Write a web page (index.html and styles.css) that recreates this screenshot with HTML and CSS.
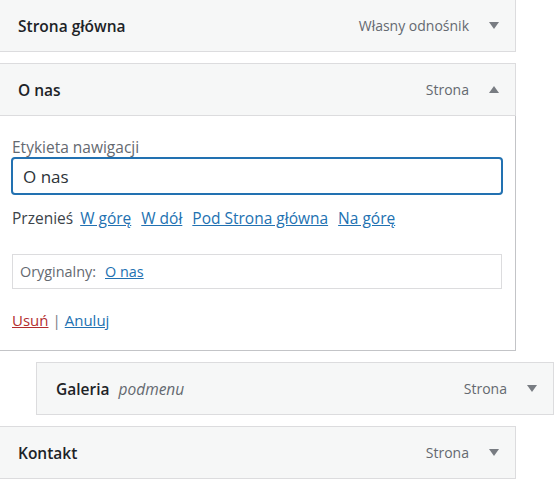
FILE: index.html
```html
<!DOCTYPE html>
<html lang="pl">
<head>
<meta charset="utf-8">
<title>Menu</title>
<link rel="stylesheet" href="styles.css">
</head>
<body>
<ul class="menu">
  <li class="item">
    <div class="bar">
      <span class="title">Strona główna</span>
      <span class="type">Własny odnośnik</span>
      <svg class="arrow" width="10" height="7" viewBox="0 0 10 7"><polygon points="0,0 10,0 5,7"/></svg>
    </div>
  </li>
  <li class="item">
    <div class="bar">
      <span class="title">O nas</span>
      <span class="type">Strona</span>
      <svg class="arrow" width="10" height="7" viewBox="0 0 10 7"><polygon points="0,7 10,7 5,0"/></svg>
    </div>
    <div class="settings">
      <label class="label" for="nav">Etykieta nawigacji</label>
      <input id="nav" class="field" type="text" value="O nas">
      <div class="move">
        <span class="move-label">Przenieś</span>
        <a href="#">W górę</a>
        <a href="#">W dół</a>
        <a href="#">Pod Strona główna</a>
        <a href="#">Na górę</a>
      </div>
      <div class="original">
        <span>Oryginalny:</span>
        <a href="#">O nas</a>
      </div>
      <div class="actions">
        <a href="#" class="delete">Usuń</a><span class="sep">|</span><a href="#">Anuluj</a>
      </div>
    </div>
  </li>
  <li class="item sub">
    <div class="bar">
      <span class="title">Galeria</span>
      <span class="subtitle">podmenu</span>
      <span class="type">Strona</span>
      <svg class="arrow" width="10" height="7" viewBox="0 0 10 7"><polygon points="0,0 10,0 5,7"/></svg>
    </div>
  </li>
  <li class="item">
    <div class="bar">
      <span class="title">Kontakt</span>
      <span class="type">Strona</span>
      <svg class="arrow" width="10" height="7" viewBox="0 0 10 7"><polygon points="0,0 10,0 5,7"/></svg>
    </div>
  </li>
</ul>
</body>
</html>
```

FILE: styles.css
```css
html, body {
  margin: 0;
  padding: 0;
  background: #ffffff;
}
body {
  font-family: "Open Sans", "Noto Sans", sans-serif;
  font-size: 15.5px;
  color: #1d2327;
}
.menu {
  list-style: none;
  margin: -1px 0 0 -2px;
  padding: 0;
  display: flex;
  flex-direction: column;
  gap: 11px;
}
.item {
  width: 518px;
}
.item.sub {
  margin-left: 38px;
}
.bar {
  box-sizing: border-box;
  height: 53px;
  border: 1px solid #dcdcde;
  background: #f6f7f7;
  display: flex;
  align-items: center;
  padding: 0 16px 0 19px;
}
.title {
  font-weight: 600;
  color: #1d2327;
}
.subtitle {
  font-style: italic;
  color: #646970;
  margin-left: 9px;
}
.type {
  margin-left: auto;
  color: #646970;
  font-size: 14px;
}
.arrow {
  margin-left: 20px;
  fill: #787c82;
}
.settings {
  box-sizing: border-box;
  border: 1px solid #c3c4c7;
  border-top: none;
  padding: 22px 12px 20px 13px;
}
.label {
  display: block;
  color: #646970;
  line-height: 19px;
}
.field {
  display: block;
  box-sizing: border-box;
  width: 492px;
  height: 38px;
  margin: 0 0 0 -1px;
  border: 2px solid #2271b1;
  border-radius: 4px;
  padding: 0 10px;
  font-family: inherit;
  font-size: 17px;
  color: #2c3338;
  outline: none;
}
.move {
  display: flex;
  gap: 10px;
  margin-top: 13px;
  line-height: 20px;
  color: #3c434a;
}
.move-label {
  margin-right: -3px;
}
a {
  color: #2271b1;
  text-decoration: underline;
}
.original {
  box-sizing: border-box;
  width: 490px;
  height: 35px;
  margin-top: 26px;
  border: 1px solid #dcdcde;
  display: flex;
  align-items: center;
  gap: 9px;
  padding: 0 7px;
  color: #646970;
  font-size: 14.4px;
}
.actions {
  margin-top: 21px;
  line-height: 20px;
  font-size: 15px;
}
.delete {
  color: #b32d2e;
}
.sep {
  color: #787c82;
  margin: 0 4px;
}
```
